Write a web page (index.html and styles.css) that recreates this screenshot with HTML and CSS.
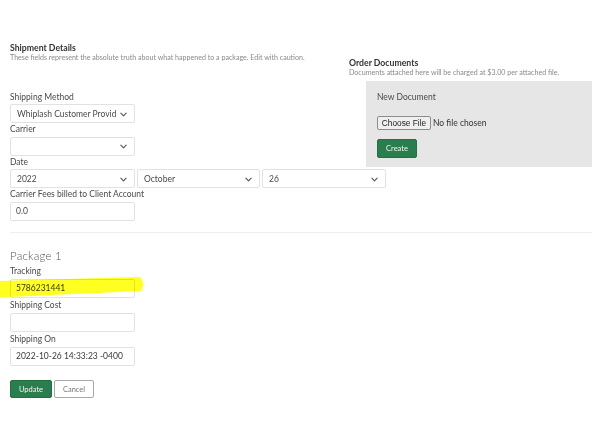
FILE: index.html
```html
<!DOCTYPE html>
<html lang="en">
<head>
<meta charset="utf-8">
<title>Shipment Details</title>
<link rel="stylesheet" href="styles.css">
</head>
<body>
<div class="page">
  <div class="top">
    <section class="details">
      <h2 class="title">Shipment Details</h2>
      <p class="sub">These fields represent the absolute truth about what happened to a package. Edit with caution.</p>
      <div class="fields">
        <label class="lbl">Shipping Method</label>
        <div class="select w125"><span>Whiplash Customer Provid</span><svg class="chev" viewBox="0 0 8 5" width="7" height="5"><path d="M1 1 L4 4 L7 1" fill="none" stroke="#555" stroke-width="1.3" stroke-linecap="round" stroke-linejoin="round"/></svg></div>
        <label class="lbl">Carrier</label>
        <div class="select w125"><span></span><svg class="chev" viewBox="0 0 8 5" width="7" height="5"><path d="M1 1 L4 4 L7 1" fill="none" stroke="#555" stroke-width="1.3" stroke-linecap="round" stroke-linejoin="round"/></svg></div>
        <label class="lbl">Date</label>
        <div class="daterow">
          <div class="select w125"><span>2022</span><svg class="chev" viewBox="0 0 8 5" width="7" height="5"><path d="M1 1 L4 4 L7 1" fill="none" stroke="#555" stroke-width="1.3" stroke-linecap="round" stroke-linejoin="round"/></svg></div>
          <div class="select w123"><span>October</span><svg class="chev" viewBox="0 0 8 5" width="7" height="5"><path d="M1 1 L4 4 L7 1" fill="none" stroke="#555" stroke-width="1.3" stroke-linecap="round" stroke-linejoin="round"/></svg></div>
          <div class="select w124"><span>26</span><svg class="chev" viewBox="0 0 8 5" width="7" height="5"><path d="M1 1 L4 4 L7 1" fill="none" stroke="#555" stroke-width="1.3" stroke-linecap="round" stroke-linejoin="round"/></svg></div>
        </div>
        <label class="lbl">Carrier Fees billed to Client Account</label>
        <div class="input w125">0.0</div>
      </div>
    </section>
    <section class="docs">
      <h2 class="title">Order Documents</h2>
      <p class="sub">Documents attached here will be charged at $3.00 per attached file.</p>
      <div class="panel">
        <div class="panel-title">New Document</div>
        <div class="filerow"><span class="filebtn">Choose File</span><span class="nofile">No file chosen</span></div>
        <div class="btn green create">Create</div>
      </div>
    </section>
  </div>
  <div class="divider"></div>
  <section class="package">
    <h3 class="pkg-title">Package 1</h3>
    <label class="lbl2">Tracking</label>
    <div class="hl-wrap">
      <div class="input w125 dark">5786231441</div>
      <svg class="highlight" viewBox="0 0 145 22" width="145" height="22"><path d="M0 4 C40 3 90 1 140 0 Q146 6 141 14 C100 16 50 18 0 20.5 Z" fill="#ffff22"/></svg>
    </div>
    <label class="lbl2">Shipping Cost</label>
    <div class="input w125"></div>
    <label class="lbl2">Shipping On</label>
    <div class="input w125 dark">2022-10-26 14:33:23 -0400</div>
    <div class="actions">
      <div class="btn green update">Update</div>
      <div class="btn outline cancel">Cancel</div>
    </div>
  </section>
</div>
</body>
</html>
```

FILE: styles.css
```css
* { box-sizing: border-box; }
html, body { margin: 0; padding: 0; background: #fff; }
body { font-family: Lato, "Open Sans", sans-serif; color: #3a3a3a; width: 592px; height: 429px; overflow: hidden; }

.page { padding-left: 10px; }
.top { display: flex; }
.details { width: 339px; padding-top: 42px; flex: none; }
.docs { flex: 1; padding-top: 56.5px; }

.title { margin: 0; font-size: 8.7px; line-height: 11px; font-weight: 700; color: #333; }
.sub { margin: 0; font-size: 7.1px; line-height: 9px; color: #8a8a8a; white-space: nowrap; }

.fields { margin-top: 28.5px; }
.lbl { display: block; font-size: 8.5px; line-height: 13.5px; color: #4a4a4a; white-space: nowrap; }

.select, .input {
  height: 19px; border: 1px solid #e2e2e2; border-radius: 2px; background: #fff;
  font-size: 8.5px; color: #4a4a4a; display: flex; align-items: center;
  padding: 0 6px; white-space: nowrap;
}
.select { justify-content: space-between; padding-right: 7px; }
.input { padding-left: 5px; }
.input.dark { color: #3a3a3a; }
.chev { flex: none; margin-top: 1px; }
.w125 { width: 125px; }
.w123 { width: 123px; }
.w124 { width: 124px; }
.daterow { display: flex; gap: 2px; width: 376px; }

.docs .sub { margin-bottom: 4.5px; }
.panel { margin-left: 17px; height: 86px; background: #e6e6e6; padding: 10px 11px 0; }
.panel-title { font-size: 8.5px; line-height: 12px; color: #4a4a4a; }
.filerow { margin-top: 13px; height: 14px; display: flex; align-items: center; }
.filebtn {
  height: 14px; width: 54px; border: 1px solid #8d8d8d; border-radius: 2px; background: #efefef;
  font-family: "Liberation Sans", Arial, sans-serif; font-size: 8.3px; color: #222;
  display: flex; align-items: center; justify-content: center; margin-right: 2px;
}
.nofile { font-size: 8.5px; color: #333; }

.btn { height: 19px; border-radius: 2px; font-size: 7.5px; display: flex; align-items: center; justify-content: center; }
.green { background: #2a7d4e; color: #f2f7f3; border: 1px solid #246f44; }
.create { margin-top: 9px; width: 40px; }

.divider { height: 1px; background: #eeeeee; margin-top: 11.5px; }

.package { padding-top: 14.5px; }
.pkg-title { margin: 0; font-size: 11.5px; line-height: 16px; font-weight: 300; color: #555; letter-spacing: 0.2px; }
.lbl2 { display: block; font-size: 8.5px; line-height: 15px; color: #4a4a4a; white-space: nowrap; }

.hl-wrap { position: relative; width: 125px; }
.highlight { position: absolute; left: -10px; top: -2px; mix-blend-mode: multiply; pointer-events: none; }

.actions { display: flex; gap: 2px; margin-top: 14.5px; }
.update { width: 42px; height: 18px; }
.outline { background: #fff; color: #777; border: 1px solid #a8a8a8; }
.cancel { width: 40px; height: 18px; }
```
